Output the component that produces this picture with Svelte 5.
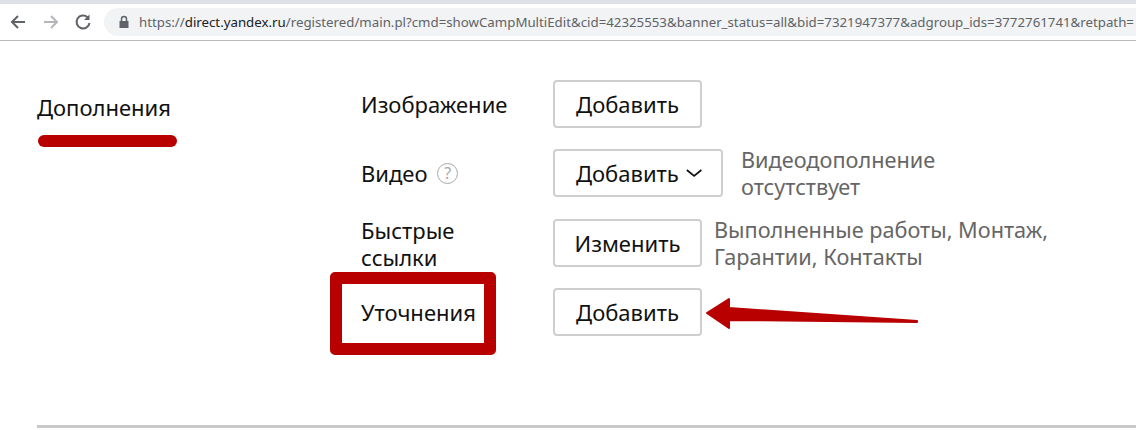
<script>
    const rows = [
        { label: 'Изображение', button: 'Добавить' },
        { label: 'Видео', help: true, button: 'Добавить', menu: true, note: 'Видеодополнение отсутствует' },
        { label: 'Быстрые ссылки', button: 'Изменить', note: 'Выполненные работы, Монтаж, Гарантии, Контакты' },
        { label: 'Уточнения', button: 'Добавить' }
    ];
</script>

<div class="page">
    <header class="browser-bar">
        <svg class="nav-icon" width="20" height="20" viewBox="0 0 20 20" fill="none" stroke="#5f6368" stroke-width="2">
            <path d="M17 10H4M10 4l-6 6 6 6" />
        </svg>
        <svg class="nav-icon" width="20" height="20" viewBox="0 0 20 20" fill="none" stroke="#b4b6b9" stroke-width="2">
            <path d="M3 10h13M10 4l6 6-6 6" />
        </svg>
        <svg class="nav-icon" width="20" height="20" viewBox="0 0 20 20" fill="none" stroke="#5f6368" stroke-width="2">
            <path d="M13.500 5.200A6.500 6.500 0 1 0 15.500 11" />
            <path d="M15.500 2.500v5.500H10z" fill="#5f6368" stroke="none" />
        </svg>
        <div class="address">
            <svg class="lock" width="12" height="14" viewBox="0 0 12 14">
                <path d="M1.500 6h9v7h-9z" fill="#5f6368" />
                <path d="M3.500 6V4a2.500 2.500 0 0 1 5 0v2" fill="none" stroke="#5f6368" stroke-width="1.500" />
            </svg>
            <span class="url"><span class="dim">https://</span>direct.yandex.ru<span class="dim">/registered/main.pl?cmd=showCampMultiEdit&amp;cid=42325553&amp;banner_status=all&amp;bid=7321947377&amp;adgroup_ids=3772761741&amp;retpath=</span></span>
        </div>
    </header>

    <main class="content">
        <div class="section-title">
            <h2>Дополнения</h2>
            <div class="underline"></div>
        </div>
        <div class="rows">
            {#each rows as row}
                <div class="row">
                    <div class="label">
                        {row.label}
                        {#if row.help}<span class="help">?</span>{/if}
                    </div>
                    <button class="btn" class:menu={row.menu}>
                        {row.button}
                        {#if row.menu}
                            <svg width="19" height="10" viewBox="0 0 19 10" fill="none" stroke="#111" stroke-width="2">
                                <path d="M1 1.500L9.500 8.500L18 1.500" />
                            </svg>
                        {/if}
                    </button>
                    {#if row.note}<div class="note">{row.note}</div>{/if}
                </div>
            {/each}
        </div>
    </main>

    <div class="divider"></div>

    <div class="highlight"></div>
    <svg class="arrow" width="216" height="40" viewBox="0 0 216 40">
        <path d="M2 17L24 3L24 12L212 25L212 26L24 24L24 32Z" fill="#b80000" stroke="#b80000" stroke-width="2" stroke-linejoin="round" />
    </svg>
</div>

<style>
    :global(body) {
        margin: 0;
        background: #fff;
    }

    .page {
        position: relative;
        width: 1136px;
        height: 430px;
        overflow: hidden;
        font-family: "Noto Sans", sans-serif;
        color: #111;
    }

    .browser-bar {
        display: flex;
        align-items: center;
        gap: 13px;
        box-sizing: border-box;
        height: 41px;
        padding: 0 0 0 8px;
        background: #fff;
        border-top: 4px solid #dee1e6;
        border-bottom: 1px solid #b9b9b9;
    }

    .nav-icon {
        flex-shrink: 0;
    }

    .address {
        display: flex;
        align-items: center;
        gap: 9px;
        flex: 1;
        min-width: 0;
        height: 28px;
        margin-left: -3px;
        padding-left: 14px;
        background: #f1f3f4;
        border-radius: 14px 0 0 14px;
        overflow: hidden;
    }

    .lock {
        flex-shrink: 0;
    }

    .url {
        font-size: 13.280px;
        color: #202124;
        white-space: nowrap;
    }
    .dim {
        color: #5f6368;
    }

    .content {
        display: flex;
        height: 383px;
        box-sizing: border-box;
        padding: 39px 0 0 37px;
    }

    .section-title {
        width: 324px;
        flex-shrink: 0;
    }
    .section-title h2 {
        margin: 13px 0 0;
        font-size: 22px;
        font-weight: 400;
        line-height: 28px;
    }
    .underline {
        width: 139px;
        height: 12px;
        margin: 14px 0 0 1px;
        background: #b80000;
        border-radius: 6px;
    }

    .rows {
        display: flex;
        flex-direction: column;
        gap: 21.300px;
    }

    .row {
        display: flex;
        align-items: center;
        width: 700px;
        height: 48px;
    }

    .label {
        width: 192px;
        flex-shrink: 0;
        font-size: 22px;
        line-height: 27px;
    }
    .row:nth-child(3) .label {
        width: 110px;
        margin-right: 82px;
        padding-top: 2px;
    }
    .row:nth-child(4) .label {
        padding-top: 2px;
    }

    .help {
        display: inline-block;
        box-sizing: border-box;
        width: 21px;
        height: 21px;
        margin-left: 4px;
        border: 1.500px solid #a8a8a8;
        border-radius: 50%;
        font-size: 16px;
        line-height: 18px;
        text-align: center;
        color: #a8a8a8;
        vertical-align: 3px;
    }

    .btn {
        display: flex;
        align-items: center;
        justify-content: center;
        gap: 7px;
        flex-shrink: 0;
        box-sizing: border-box;
        min-width: 149px;
        height: 48px;
        padding: 0 19px;
        background: #fff;
        border: 2px solid #cfcfcf;
        border-radius: 4px;
        font: inherit;
        font-size: 22px;
        color: #111;
    }
    .btn.menu {
        width: 170px;
        justify-content: flex-start;
        padding-left: 21px;
    }

    .note {
        flex-shrink: 0;
        margin-left: 18px;
        font-size: 21.700px;
        line-height: 27px;
        color: #666;
    }
    .row:nth-child(2) .note {
        width: 230px;
    }
    .row:nth-child(3) .note {
        width: 345px;
        margin-left: 12px;
    }

    .divider {
        position: absolute;
        left: 37px;
        right: 0;
        top: 425px;
        height: 3px;
        background: #c9c9c9;
    }

    .highlight {
        position: absolute;
        left: 330px;
        top: 272px;
        width: 166px;
        height: 83px;
        box-sizing: border-box;
        border: 12px solid #b80000;
        border-radius: 5px;
    }

    .arrow {
        position: absolute;
        left: 705px;
        top: 296px;
    }
</style>
